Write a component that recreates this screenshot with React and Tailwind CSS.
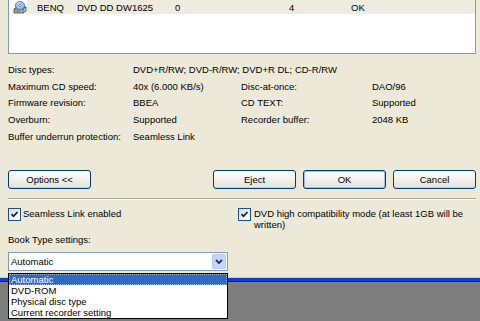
function DriveIcon() {
  return (
    <svg width="14" height="13" viewBox="0 0 14 13">
      <path d="M1 8 L4 6 L13 6 L13 10 L10 12 L1 12 Z" fill="#C8C8C0" stroke="#3A3A3A" strokeWidth="0.8" />
      <path d="M1 8 L10 8 L13 6" fill="none" stroke="#3A3A3A" strokeWidth="0.7" />
      <path d="M10 8 L10 12" stroke="#3A3A3A" strokeWidth="0.7" />
      <rect x="2" y="9.5" width="6" height="1.2" fill="#6A6A6A" />
      <ellipse cx="7" cy="4.5" rx="4.6" ry="4" fill="#9CC4F0" stroke="#2A5FB0" strokeWidth="0.8" />
      <ellipse cx="7" cy="4.5" rx="1.2" ry="1" fill="#FFFFFF" stroke="#2A5FB0" strokeWidth="0.5" />
      <path d="M4 3 Q5 1.5 7 1.3" stroke="#FFFFFF" strokeWidth="0.8" fill="none" />
    </svg>
  );
}

function Check() {
  return (
    <div className="w-[13px] h-[13px] border border-[#1C5180] bg-gradient-to-br from-[#DCDCD7] to-white flex items-center justify-center">
      <svg width="9" height="9" viewBox="0 0 9 9">
        <path d="M1.5 4.2 L3.5 6.3 L7.5 2" stroke="#0E1F48" strokeWidth="1.7" fill="none" />
      </svg>
    </div>
  );
}

function Btn({ children, def }) {
  return (
    <div
      className={
        "w-[83px] h-[19px] rounded-[3px] border border-[#003C74] bg-gradient-to-b from-white to-[#E3E2DA] flex items-center justify-center " +
        (def ? "shadow-[inset_0_0_0_1px_#9DBCF0]" : "shadow-[inset_0_-1px_0_#D6D0C5]")
      }
    >
      {children}
    </div>
  );
}

export default function App() {
  return (
    <div className="relative w-[480px] h-[321px] overflow-hidden bg-[#7E7E7E] text-[9.5px] text-black font-['Liberation_Sans',Arial,sans-serif] leading-[11px]">
      <div className="h-[277px] bg-[#ECE9D8] flex flex-col">
        <div className="ml-[8px] w-[468px] h-[54px] shrink-0 bg-white border-x border-b border-[#7F9DB9]">
          <div className="flex h-[14px]">
            <div className="w-[18px] h-full flex items-center pl-[4px]">
              <DriveIcon />
            </div>
            <div className="flex-1 h-full bg-[#EEEBE1] flex items-center pl-[10px]">
              <span className="w-[40px]">BENQ</span>
              <span className="w-[98px]">DVD DD DW1625</span>
              <span className="w-[114px]">0</span>
              <span className="w-[62px]">4</span>
              <span>OK</span>
            </div>
          </div>
        </div>

        <div className="mt-[7px] ml-[8px] grid grid-cols-[125px_108px_131px_1fr] auto-rows-[16.75px] items-center">
          <span>Disc types:</span>
          <span className="col-span-3">DVD+R/RW; DVD-R/RW; DVD+R DL; CD-R/RW</span>
          <span>Maximum CD speed:</span>
          <span>40x (6.000 KB/s)</span>
          <span>Disc-at-once:</span>
          <span>DAO/96</span>
          <span>Firmware revision:</span>
          <span>BBEA</span>
          <span>CD TEXT:</span>
          <span>Supported</span>
          <span>Overburn:</span>
          <span>Supported</span>
          <span>Recorder buffer:</span>
          <span>2048 KB</span>
          <span>Buffer underrun protection:</span>
          <span className="col-span-3">Seamless Link</span>
        </div>

        <div className="mt-[25.25px] ml-[8px] w-[468px] flex items-center">
          <Btn>Options &lt;&lt;</Btn>
          <div className="flex-1" />
          <div className="flex gap-[7px]">
            <Btn>Eject</Btn>
            <Btn def>OK</Btn>
            <Btn>Cancel</Btn>
          </div>
        </div>

        <div className="mt-[9px] ml-[8px] w-[468px] h-[2px] border-t border-[#ACA899] border-b border-b-white" />

        <div className="mt-[8px] ml-[8px] flex">
          <div className="w-[230px] flex items-start gap-[2px]">
            <Check />
            <span className="mt-[0px]">Seamless Link enabled</span>
          </div>
          <div className="flex items-start gap-[3px]">
            <Check />
            <span>
              DVD high compatibility mode (at least 1GB will be
              <br />
              written)
            </span>
          </div>
        </div>

        <div className="mt-[4px] ml-[8px]">Book Type settings:</div>

        <div className="mt-[7px] ml-[8px] w-[220px] h-[19px] bg-white border border-[#7F9DB9] flex items-center">
          <span className="flex-1 pl-[2px]">Automatic</span>
          <div className="w-[14px] h-[15px] mr-[1px] rounded-[2px] bg-[#C6D6FA] border border-[#B3C8F5] flex items-center justify-center">
            <svg width="8" height="6" viewBox="0 0 8 6">
              <path d="M1 1 L4 4 L7 1" stroke="#25356B" strokeWidth="1.8" fill="none" />
            </svg>
          </div>
        </div>
      </div>

      <div className="h-[1px] bg-[#B8CBF2]" />
      <div className="h-[3px] bg-[#0B3FD8]" />
      <div className="h-[1px] bg-[#0020A0]" />

      <div className="absolute left-[8px] top-[273px] w-[220px] h-[46px] bg-white border border-black flex flex-col">
        <div className="h-[11px] bg-[#316AC5] text-white pl-[2px] flex items-center outline-dotted outline-1 outline-[#9FB8E0] -outline-offset-1">Automatic</div>
        <div className="h-[11px] pl-[2px] flex items-center">DVD-ROM</div>
        <div className="h-[11px] pl-[2px] flex items-center">Physical disc type</div>
        <div className="h-[11px] pl-[2px] flex items-center">Current recorder setting</div>
      </div>
    </div>
  );
}
